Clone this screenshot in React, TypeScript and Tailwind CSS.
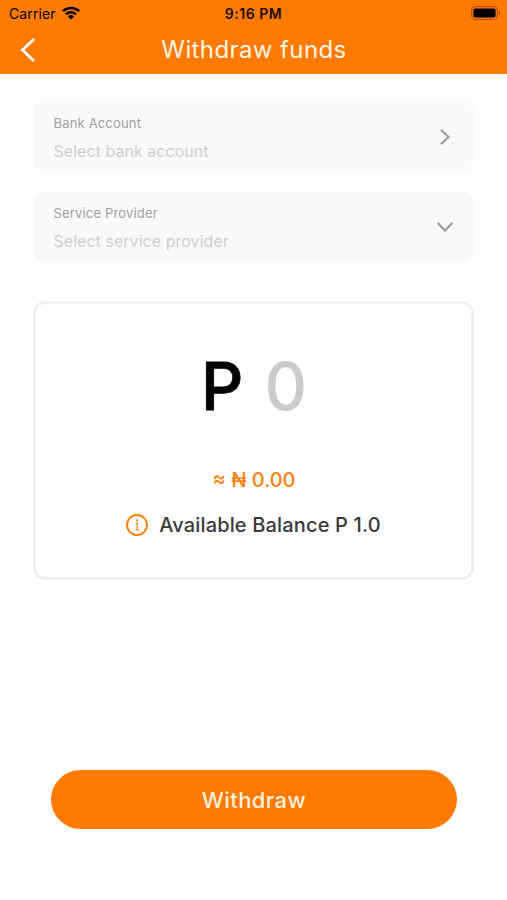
import { useState } from 'react'
import { clsx } from 'clsx'

interface SelectField {
  id: string
  label: string
  placeholder: string
  direction: 'right' | 'down'
}

const FIELDS: SelectField[] = [
  { id: 'bank', label: 'Bank Account', placeholder: 'Select bank account', direction: 'right' },
  { id: 'provider', label: 'Service Provider', placeholder: 'Select service provider', direction: 'down' },
]

export default function App() {
  const [amount] = useState(0)

  return (
    <div className="flex h-[900px] w-full flex-col bg-white font-['Inter',sans-serif]">
      {/* Header */}
      <header className="h-[74px] bg-[#ff7a00]">
        <StatusBar />
        <div className="grid h-11 grid-cols-[60px_1fr_60px] items-center">
          <button aria-label="Back" className="flex pl-5">
            <svg width="16" height="26" viewBox="0 0 16 26" fill="none" stroke="white" strokeWidth="2.8">
              <path d="M14 2 2.5 13 14 24" />
            </svg>
          </button>
          <h1 className="pl-px text-center text-2xl leading-[30px] tracking-[0.4px] whitespace-nowrap text-[#fff6e6]">
            Withdraw funds
          </h1>
        </div>
      </header>

      <main className="flex flex-col px-[33px] pt-[26.5px]">
        {/* Account selectors */}
        <div className="flex flex-col gap-5">
          {FIELDS.map(field => (
            <FieldRow key={field.id} field={field} />
          ))}
        </div>

        {/* Amount */}
        <section className="mt-[40.5px] flex h-[279px] flex-col items-center rounded-xl border-3 border-[#f0f0f0]">
          <div className="mt-[42px] flex items-center gap-[21px] pl-px text-[66px] leading-[80px]">
            <span className="font-medium text-black [-webkit-text-stroke:0.8px_black]">P</span>
            <span className="font-medium text-[#cbcbcb]">{amount}</span>
          </div>
          <p className="mt-[42px] pl-px text-xl leading-6 font-medium text-[#ff7f11]">≈ ₦ {amount.toFixed(2)}</p>
          <div className="mt-[21px] flex items-center gap-[11px]">
            <InfoIcon />
            <p className="text-xl leading-6 font-medium tracking-[0.16px] whitespace-nowrap text-[#3a3a3a]">
              Available Balance P 1.0
            </p>
          </div>
        </section>

        <button className="mr-[17px] ml-[18px] mt-[190px] h-[59px] rounded-full bg-[#ff7a00] pt-px text-[22px] font-medium tracking-[0.4px] text-[#fff3df]">
          Withdraw
        </button>
      </main>
    </div>
  )
}

function StatusBar() {
  return (
    <div className="grid h-7 grid-cols-3 items-center text-black">
      <div className="flex items-center gap-1.5 pl-[9px]">
        <span className="text-sm leading-5 tracking-[0.1px]">Carrier</span>
        <svg width="18" height="14" viewBox="0 0 18 14" fill="none" stroke="currentColor" strokeWidth="2.5" className="-mt-0.5">
          <path d="M.9 5.2a11.6 11.6 0 0 1 16.2 0" />
          <path d="M3.9 8.4a7.3 7.3 0 0 1 10.2 0" />
          <path d="M9 13.6 5.9 10.5a4.5 4.5 0 0 1 6.2 0Z" fill="currentColor" stroke="none" />
        </svg>
      </div>
      <span className="text-center text-sm leading-5 font-semibold tracking-[0.5px] text-[#1a0c00]">9:16 PM</span>
      <div className="flex justify-end pr-[6px]">
        <svg width="30" height="14" viewBox="0 0 30 14" className="-mt-0.5">
          <rect x=".6" y=".6" width="25.8" height="12.8" rx="3.6" fill="none" stroke="#a34e00" />
          <rect x="2.4" y="2.4" width="22.2" height="9.2" rx="2" />
          <path d="M27.6 4.8v4.4c1-.4 1.6-1.2 1.6-2.2s-.6-1.8-1.6-2.2Z" fill="#a34e00" />
        </svg>
      </div>
    </div>
  )
}

function FieldRow({ field }: { field: SelectField }) {
  return (
    <button className="flex h-[70px] items-center justify-between rounded-xl bg-[#f9f9f9] pr-5 pl-[20.5px] text-left">
      <span className="flex flex-col pt-[5px]">
        <span className="text-[13px] leading-4 tracking-[0.17px] text-[#a0a0a0]">{field.label}</span>
        <span className="mt-[10px] text-base leading-5 tracking-[0.04px] text-[#cfcfcf]">{field.placeholder}</span>
      </span>
      <svg
        width="18"
        height="18"
        viewBox="0 0 18 18"
        fill="none"
        stroke="#a0a0a0"
        strokeWidth="2.3"
        className={clsx('mt-0.5', field.direction === 'down' && 'rotate-90')}
      >
        <path d="M5 1.8 12.5 9 5 16.2" />
      </svg>
    </button>
  )
}

function InfoIcon() {
  return (
    <svg width="22" height="22" viewBox="0 0 22 22" fill="none" stroke="#ff7f11">
      <circle cx="11" cy="11" r="10" strokeWidth="1.9" />
      <path d="M9.6 9.3h1.6v6.6M9.3 16h3.8" strokeWidth="1.2" />
      <circle cx="11" cy="6.3" r="1.1" fill="#ff7f11" stroke="none" />
    </svg>
  )
}
